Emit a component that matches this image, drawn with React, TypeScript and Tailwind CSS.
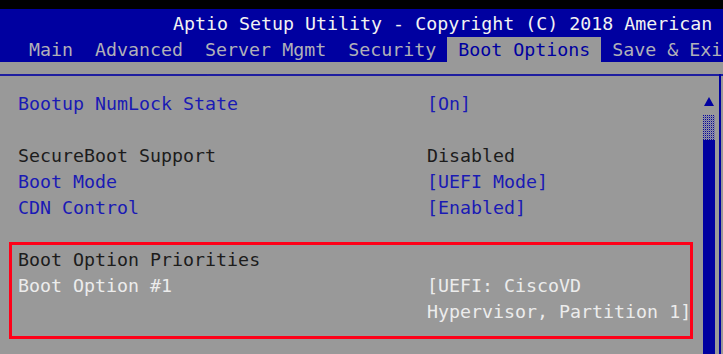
import React from "react";

const tabs = ["Main", "Advanced", "Server Mgmt", "Security", "Boot Options", "Save & Exit"];

type Row = { label?: string; value?: string; kind?: "blue" | "dark" | "sel" };

const rows: Row[] = [
  { label: "Bootup NumLock State", value: "[On]", kind: "blue" },
  {},
  { label: "SecureBoot Support", value: "Disabled", kind: "dark" },
  { label: "Boot Mode", value: "[UEFI Mode]", kind: "blue" },
  { label: "CDN Control", value: "[Enabled]", kind: "blue" },
  {},
  { label: "Boot Option Priorities", kind: "dark" },
  { label: "Boot Option #1", value: "[UEFI: CiscoVD", kind: "sel" },
  { label: "", value: "Hypervisor, Partition 1]", kind: "sel" },
];

const colorFor = (k?: string) =>
  k === "blue" ? "text-[#1a1ab4]" : k === "sel" ? "text-[#ececec]" : "text-[#1c1c1c]";

export default function App() {
  return (
    <div className="relative w-[723px] h-[354px] overflow-hidden bg-[#999999] font-['DejaVu_Sans_Mono',monospace] text-[18.3px]">
      <div className="h-[9px] bg-black" />
      <div className="h-[53px] bg-[#0000a0] flex flex-col">
        <div className="h-[28px] pt-[2px] pl-[173px] leading-[26px] whitespace-pre text-[#f2f2f2] overflow-hidden">
          Aptio Setup Utility - Copyright (C) 2018 American
        </div>
        <div className="h-[25px] flex pl-[18px] leading-[25px] whitespace-pre">
          {tabs.map((t) => (
            <div
              key={t}
              className={
                t === "Boot Options"
                  ? "px-[11px] bg-[#999999] text-[#0000a0]"
                  : "px-[11px] text-[#b0b0b8]"
              }
            >
              {t}
            </div>
          ))}
        </div>
      </div>
      <div className="h-[12px]" />
      <div className="h-[2px] bg-[#1e1ea0]" />
      <div className="flex h-[278px]">
        <div className="w-[703px] pt-[15px] pl-[18px] leading-[26px] whitespace-pre">
          {rows.map((r, i) => (
            <div key={i} className={`h-[26px] flex ${colorFor(r.kind)}`}>
              <div className="w-[409px]">{r.label}</div>
              <div>{r.value}</div>
            </div>
          ))}
        </div>
        <div className="w-[12px] flex flex-col items-center">
          <div className="h-[21px]" />
          <svg width="10" height="9" viewBox="0 0 10 9" className="block">
            <polygon points="5,0 10,9 0,9" fill="#0000a0" />
          </svg>
          <div className="h-[9px]" />
          <svg width="12" height="25" className="block">
            <defs>
              <pattern id="dots" width="2" height="2" patternUnits="userSpaceOnUse">
                <rect x="0" y="0" width="1" height="1" fill="#0000a0" />
                <rect x="1" y="1" width="1" height="1" fill="#6a6ab0" />
              </pattern>
            </defs>
            <rect x="0" y="0" width="12" height="25" fill="url(#dots)" />
          </svg>
          <div className="w-[12px] flex-1 bg-[#0000a0]" />
        </div>
        <div className="w-[4px]" />
        <div className="w-[2px] -mt-[2px] h-[280px] bg-[#0000a0]" />
      </div>
      <div className="absolute left-[9px] top-[242px] w-[684px] h-[97px] border-[3px] border-[#ff0018]" />
    </div>
  );
}
